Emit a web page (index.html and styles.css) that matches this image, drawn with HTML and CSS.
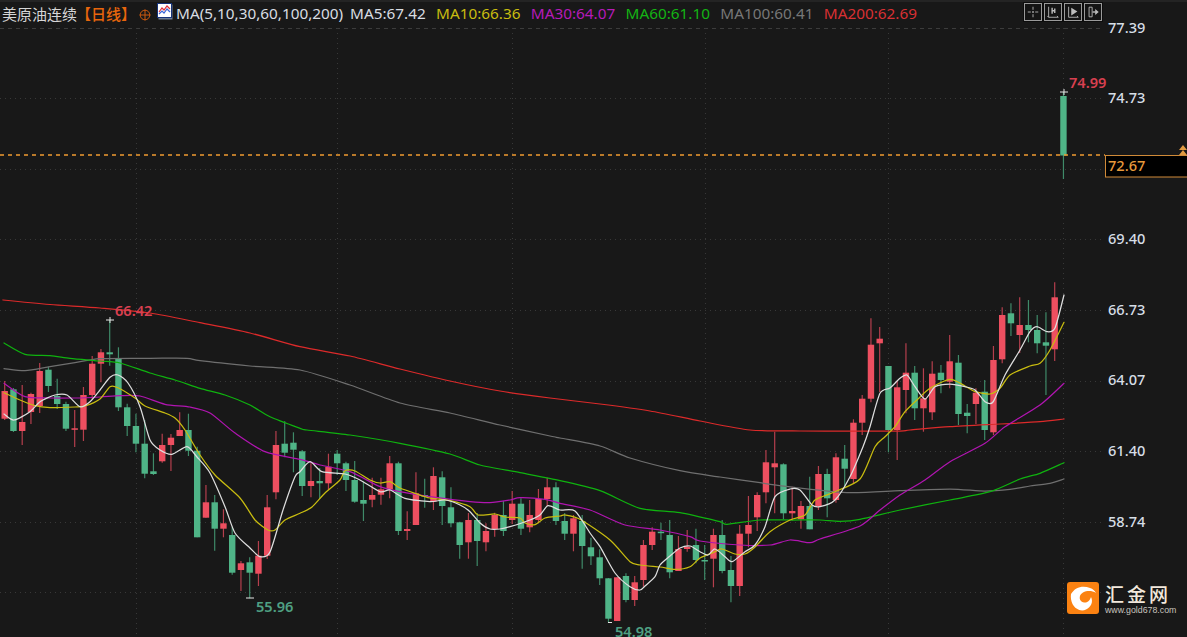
FILE: index.html
```html
<!DOCTYPE html>
<html lang="zh">
<head>
<meta charset="utf-8">
<title>美原油连续 日线</title>
<link rel="stylesheet" href="styles.css">
</head>
<body>
<div class="app">
  <header class="legend">
    <span class="symbol">美原油连续</span>
    <span class="period">【日线】</span>
    <svg class="target" viewBox="0 0 12 12"><circle cx="6" cy="6" r="4.8"/><path d="M0.5 6H11.5M6 0.5V11.5"/></svg>
    <svg class="ma-icon" viewBox="0 0 16 17">
      <rect class="ma-shadow" x="1.500" y="1.500" width="14" height="15"/>
      <rect class="ma-paper" x="0.500" y="0.500" width="14" height="14"/>
      <path class="ma-blue" d="M2 11L5 8L7 10L10 6L13 9"/>
      <path class="ma-red" d="M2 9L5 5L7 7L10 3L13 6"/>
    </svg>
    <span class="ma ma-base ma-first">MA(5,10,30,60,100,200)</span>
    <span class="ma ma-base">MA5:67.42</span>
    <span class="ma ma-y">MA10:66.36</span>
    <span class="ma ma-p">MA30:64.07</span>
    <span class="ma ma-g">MA60:61.10</span>
    <span class="ma ma-d">MA100:60.41</span>
    <span class="ma ma-r">MA200:62.69</span>
    <div class="tools">
      <button class="tool"><svg viewBox="0 0 16 16"><path d="M8 2V5.500M8 10.500V14M2 8H5.500M10.500 8H14"/><path d="M7.500 7.500h1v1h-1z"/></svg></button>
      <button class="tool"><svg viewBox="0 0 16 16"><path d="M3 2V14H14M3 14L1.500 12.500M14 14L12.500 12.500"/><path class="fat" d="M7 3V10M10 4V9M7 6.500H10"/></svg></button>
      <button class="tool"><svg viewBox="0 0 16 16"><path d="M3 2V14H14M14 14L12.500 12.500"/><path class="solid" d="M6 3L13 7.500L6 12Z"/></svg></button>
      <button class="tool"><svg viewBox="0 0 16 16"><path d="M3.500 2.500H7V13.500H3.500Z"/><path class="fat" d="M7.500 8H11"/><path class="solid" d="M10.500 4.500L14.500 8L10.500 11.500Z"/></svg></button>
    </div>
  </header>
  <svg class="chart" viewBox="0 24 1187 613" xmlns="http://www.w3.org/2000/svg">
    <g class="grid">
      <path class="grid-top" d="M0 28.500H1103"/>
      <path d="M0 98.500H1103M0 169.500H1103M0 239.500H1103M0 310.500H1103M0 381.500H1103M0 451.500H1103M0 522.500H1103M0 592.500H1103"/>
      <path d="M136.500 28V637M337.500 28V637M512.500 28V637M705.500 28V637M888.500 28V637M1063.500 28V637"/>
    </g>
    <g id="candles"></g>
    <g id="averages"></g>
    <path class="last-line" d="M0 155H1105"/>
    <path class="mark" d="M106 320H114M110 317V323M246 598H254M608 622.500H612M1060 92H1068M1064 89V95"/>
    <g class="axis">
      <text x="1108" y="33">77.39</text>
      <text x="1108" y="103">74.73</text>
      <text x="1108" y="244">69.40</text>
      <text x="1108" y="315">66.73</text>
      <text x="1108" y="385">64.07</text>
      <text x="1108" y="456">61.40</text>
      <text x="1108" y="527">58.74</text>
    </g>
    <g class="extreme">
      <text class="high" x="115" y="316">66.42</text>
      <text class="high" x="1069" y="88">74.99</text>
      <text class="low" x="256" y="612">55.96</text>
      <text class="low" x="615" y="636.500">54.98</text>
    </g>
    <path class="arrows" d="M1183 145L1187 150H1179ZM1183 150L1187 155H1179Z"/>
    <rect class="price-box" x="1105.500" y="155.500" width="90" height="21.500"/>
    <text class="price-text" x="1108" y="171">72.67</text>
  </svg>
  <div class="logo">
    <svg class="logo-mark" viewBox="0 0 32 32">
      <rect class="logo-bg" width="32" height="32" rx="3"/>
      <path class="logo-sun" d="M4 12C8 5 16 3 23 6C26 7 27.500 8.500 29 11C25 8.500 20 8.500 16 10.500C11 13 12 20 17 20.500C21 21 23 18 24 15C26.500 20 24 25 19 27.500C14 30 8 27 5.500 22C4 19 3.500 15 4 12Z"/>
    </svg>
    <div class="logo-text">
      <span class="logo-name">汇金网</span>
      <span class="logo-url">www.gold678.com</span>
    </div>
  </div>
</div>
<script src="chart.js"></script>
</body>
</html>
```
FILE: styles.css
```css
* { box-sizing: border-box; }
html, body { margin: 0; height: 100%; background: #181818; overflow: hidden; }
.app {
  position: relative;
  width: 1187px;
  height: 637px;
  background: #181818;
  border-top: 2px solid #242424;
  font-family: "Noto Sans", "Noto Sans CJK SC", sans-serif;
}
.legend {
  display: flex;
  align-items: center;
  height: 22px;
  padding: 0 84px 0 2px;
  font-size: 15.3px;
  white-space: nowrap;
}
.symbol { color: #d6d6d6; font: 15px "Noto Sans CJK SC", sans-serif; }
.period { color: #e8660c; font: 500 15px "Noto Sans CJK SC", sans-serif; margin-left: -1px; margin-right: -1px; }
.target { width: 12px; height: 12px; margin: 3px 0 0 4px; fill: none; stroke: #c9590f; stroke-width: 1; }
.ma-icon { width: 16px; height: 17px; margin: -4px 3px 0 6px; flex: none; }
.ma-shadow { fill: #6d7d94; }
.ma-paper { fill: #fff; stroke: #16337a; stroke-width: 1; }
.ma-red, .ma-blue { fill: none; stroke-width: 1.2; }
.ma-red { stroke: #e0303a; }
.ma-blue { stroke: #3a66d8; }
.ma { margin-right: 10.4px; }
.ma-first { margin-right: 7px; }
.ma-base { color: #d8dde2; }
.ma-y { color: #c8bc10; }
.ma-p { color: #b61bb8; }
.ma-g { color: #14b414; }
.ma-d { color: #777; }
.ma-r { color: #d93033; }
.tools { display: flex; gap: 2px; margin-left: auto; margin-top: -3px; background: #0c0c0c; padding: 1px; }
.tool {
  width: 18px; height: 18px; padding: 0;
  background: #141414;
  border: 1px solid #9a9a9a;
  display: flex; align-items: center; justify-content: center;
}
.tool svg { width: 14px; height: 14px; fill: none; stroke: #bdbdbd; stroke-width: 1; }
.tool .fat { stroke-width: 1.6; }
.tool .solid { fill: #bdbdbd; stroke: none; }
.chart { display: block; width: 1187px; height: 613px; overflow: visible; font-family: "Noto Sans", sans-serif; }
.grid path { fill: none; stroke: #383838; stroke-width: 1; stroke-dasharray: 1 4; }
.grid .grid-top { stroke: #3c3c3c; stroke-dasharray: 4 4; }
.last-line { stroke: #f09a30; stroke-width: 1.5; stroke-dasharray: 4 4; fill: none; }
.wick { stroke-width: 1.2; fill: none; }
.body-up { fill: #ee4f60; }
.body-down { fill: #4fb487; }
.wick-up { stroke: #b53f4d; }
.wick-down { stroke: #3f8a69; }
.avg { fill: none; stroke-width: 1.25; stroke-linejoin: round; stroke-linecap: round; }
.avg-5 { stroke: #dedede; }
.avg-10 { stroke: #c8bc10; }
.avg-30 { stroke: #b015b0; }
.avg-60 { stroke: #0fb20f; }
.avg-100 { stroke: #6f6f6f; }
.avg-200 { stroke: #dc2a2a; }
.mark { stroke: #e6e6e6; stroke-width: 1; fill: none; }
.axis text { fill: #d6dee6; font-size: 14.6px; font-weight: 500; }
.extreme text { font-size: 14.6px; font-weight: 600; }
.high { fill: #d84050; }
.low { fill: #4fa083; }
.arrows { fill: #e09a42; }
.price-box { fill: #000; stroke: #d08a38; stroke-width: 1; }
.price-text { fill: #e89a3c; font-size: 14.6px; font-weight: 500; }
.logo {
  position: absolute;
  left: 1067px;
  top: 580px;
  display: flex;
  gap: 6px;
  align-items: flex-start;
}
.logo-mark { width: 32px; height: 32px; flex: none; }
.logo-bg { fill: #fb8212; }
.logo-sun { fill: #fff; fill-rule: evenodd; }
.logo-text { display: flex; flex-direction: column; color: #f2e8dc; margin-top: -1px; }
.logo-name { font: 500 19px/25px "Noto Sans CJK SC", sans-serif; letter-spacing: 3px; }
.logo-url { font: 8.8px/9px "Liberation Sans", sans-serif; color: #c8c4be; }
```
FILE: chart.js
```js
// [isUp, bodyTop, bodyBottom, wickTop, wickBottom]
var candles = [
[1,391,418.7,381,420],[0,389.3,431,388,432],[1,422,431,385,445],[1,394,412,392.7,424],[1,371,406,363,413],[0,369.7,386,366.7,392],
[0,396,404,378.7,409],[0,404,428.7,401.7,431],[1,428.3,429.7,410,447],[1,395,429.7,387,441],[1,363.7,395,356,399],[1,352.3,363.7,349,382.3],
[0,352.3,354.3,320,365.7],[0,358.3,407.3,347.3,411],[0,407.3,426,403.7,436],[0,426,443.7,413.7,452.3],[0,443.7,473.7,420,478.3],[0,471.3,474,453.3,475],
[1,445,461.3,433.7,462.7],[1,437.7,445,434,471],[1,430,436,412.3,436],[0,430,450.7,413.7,456],[0,450.7,537.3,446.7,537.3],[1,502.3,517.7,485,517.7],
[0,502.3,528.7,495,550.7],[1,523.3,528.7,509.3,537.3],[0,535,572.7,526.7,574.7],[1,563.3,570,561,591],[0,562.3,572.7,557.3,598.3],[1,555.7,573.7,541,586],
[1,507.3,555.7,495,559],[1,445,492.3,431,499.3],[0,443.7,452.7,421.3,457.3],[0,442.7,449.7,432.3,472.3],[0,451.3,486,450,496],[1,481,486,463.3,497.3],
[0,481,483.3,468,499],[1,466.7,483.3,453.7,490],[0,453.7,463.3,450,475],[0,463.3,480,461.7,491],[0,480,501.7,461,502.7],[0,500,503.7,481.7,521],
[1,495,499.7,477.7,507.3],[1,489.3,494.7,477.7,504.7],[1,463.3,489.3,456,498.3],[0,463.3,531,461.7,535],[1,529,531,511.3,540],[1,493.3,525,472.3,525],
[0,495,496.7,478.7,507.7],[1,476,501.7,467.3,510],[0,477.3,506,471.3,525],[0,507.3,523.3,487.3,527.3],[0,522.3,545,521.7,558.7],[1,520,542.3,513,558.7],
[0,520,541,513,566],[1,531,542.3,523.3,551.3],[1,515,529,512.7,536.7],[0,515,531,501,536],[1,503.7,520,491,524],[0,503.7,528.7,498.3,535],
[1,515,527.3,500,532.3],[1,499,520,489,523.3],[1,487.3,499,477.7,506],[0,487.3,521,482.3,525],[0,521,533.7,513,540],[1,518.3,533.7,515,551.3],
[0,521,546,515,568.7],[0,547.3,556.3,537.7,565],[0,557.3,578.3,549.3,585],[0,578.3,618.7,578,622.7],[1,577.3,621,577.3,621],[0,576,600,573.3,602.3],
[1,582.3,600,576,606],[1,545,580,540,586.7],[1,531.7,545,527.3,550],[0,531.7,532.3,522.7,540],[0,535,572.3,520,578.3],[1,549,571,536,571],
[1,546.7,549,530,551.7],[0,545,560,528.7,563.3],[0,560,561,545,580],[1,535,558.7,528.7,587.3],[0,535,571,520,573.3],[0,570,586,556,602.3],
[1,533.7,586,525,596],[1,525,533.7,496,547.3],[1,495,517.3,492.3,531],[1,462.3,492.3,450,503.3],[1,463.3,467.3,431.7,513.3],[0,464.3,513.3,463.3,519.3],
[1,511,513.3,486.7,520.7],[1,506,519.3,501,528.7],[0,506,529.3,476.7,529.3],[1,474,506,466,510],[0,474,498.3,468.7,517.3],[1,457.3,500,453.3,502.7],
[0,458.7,468.7,445,488.3],[1,422.7,479,419.3,483.3],[1,398.7,422.7,395,435],[1,344.7,398.7,318.3,402.3],[1,338.7,343.3,327,392],[0,366,430,366,452.3],
[1,387.3,430,381,460],[1,372.7,390,343.3,413.3],[0,372.7,408.3,366,420],[1,398.3,408.3,368.3,431.7],[1,373.7,412.3,361.3,420],[0,372.7,380,365,393.3],
[1,361.3,381.7,335,388.3],[0,362.7,414,355,425],[0,412.7,416,404,433.3],[1,392.7,404,388.3,424],[0,391.7,430,380,440],[1,360,432.3,346,435],
[1,315,359.3,307.3,363.3],[0,313.3,323.3,303.3,336],[1,325,335,297.3,353],[0,325,330,300,342.3],[0,330,343.3,315,353.3],[0,342.3,345.7,312.3,395],
[1,297.3,349.3,282.3,361],[0,96,155.5,92,179]
];

var averages = {
200: "3,300 50,304.5 100,308 150,313 200,322.7 250,333 300,346.7 350,356 400,369 450,381 500,391 550,398 600,404 650,411 700,421 750,430 800,431 850,431 900,431 910,430 950,426.7 1000,424 1040,421.7 1064,419",
100: "4,368.7 25,370.7 50,366.7 75,362.7 100,358.7 150,358.3 187,358.3 200,360.7 250,366 300,370 350,385 400,403 450,413 500,425 550,436 560,438 600,446 630,458 680,470.7 720,477 760,482.7 800,488 850,492.7 900,490.7 950,489 985,491 1010,489.3 1030,486 1050,483.3 1064,479",
60: "4,343 25,354.3 50,355.7 70,358.3 100,361 120,363 150,373 175,380 200,388.3 225,395 250,405 270,416.7 300,428.3 307,430 350,435 400,443.3 450,454 480,465 520,472.7 560,480.7 600,490.7 640,508.3 680,512.7 720,521.7 727,524.3 760,520 793,520 820,520 840,521.3 860,519.3 900,510 950,500 990,491.7 1020,479 1040,473.3 1064,462.7",
30: "4,383.3 25,396.7 50,398 75,398 100,397 120,395.7 140,396 165,404.3 190,407 210,413 235,433 265,451.7 300,459.3 320,465 350,471.7 380,486.7 400,491.7 430,496.7 470,501.7 490,502.7 510,500 520,497.7 545,499.3 560,503.3 590,510 625,525 660,530 690,536.7 700,541 740,545 770,545 790,540 810,542.7 820,539 860,526 880,510 900,495 925,480 950,461.7 985,443.3 1005,426.7 1040,405 1064,383.3",
10: "4,392.7 20,400 35,405.7 50,407.7 75,407 85,406 100,399 110,386.7 118,387.7 135,398 145,406 165,413 175,418 185,430 200,455 215,475 240,498 255,520 268,530 275,530 285,520 300,513.3 312,507 325,493 340,480 345,470.7 355,471 370,480 380,483 390,481.7 400,488 415,493.3 430,498 450,500.7 470,506.7 478,515 495,514 505,517 520,518 525,523 535,524.7 545,518 560,516 565,515 580,519.3 610,540 630,561.7 640,565 660,567 675,569.3 690,566.7 700,558 715,551.7 722,549 735,554 745,554 755,547 770,531.7 790,520 805,515 815,500 835,491.7 860,479 875,446.7 885,436.7 895,426.7 905,411.7 918,399 930,388.3 950,379.3 965,386 975,391.7 990,394 1000,388.3 1010,375 1030,366 1040,363.3 1050,350 1064,322.3",
5: "4,414 14,420 30,411.7 40,401.7 55,395 67,395 80,406.7 90,401.7 100,390 110,377.3 118,375 128,383 140,406.7 150,440 160,450 172,454.3 187,446.7 197,457 210,473 225,506.7 235,533 250,548 260,556.7 270,552 283,510 295,476.7 300,471.7 310,461.7 322,471.7 345,474 360,480 380,491.7 390,490 405,498.3 430,501.7 445,500 460,505 470,511.7 480,523 490,529 500,529 510,526.7 530,520 540,515 548,505.7 560,510 575,511 590,533 600,546.7 615,573 630,586.7 640,590 645,586 655,576.7 660,565 670,556 680,548 690,546 700,551.7 708,555 715,549 725,556.7 732,561.7 745,551.7 755,545 765,526.7 775,496.7 790,489 800,490 812,505 820,506.7 835,500 850,476.7 863,446.7 870,426.7 880,393.3 890,388 900,378.3 907,375 915,386.7 925,399 935,386.7 950,384 965,386.7 975,390 985,401.7 993,402 1005,375 1020,350 1030,331.7 1037,326.7 1047,331.7 1055,328 1064,295"
};

var NS = "http://www.w3.org/2000/svg";
function add(parent, tag, attrs) {
  var el = document.createElementNS(NS, tag);
  for (var k in attrs) el.setAttribute(k, attrs[k]);
  parent.appendChild(el);
}

// Catmull-Rom through the sampled points, so the averages read as curves.
function smooth(str) {
  var p = str.split(" ").map(function (s) { return s.split(",").map(Number); });
  var d = "M" + p[0][0] + " " + p[0][1];
  for (var i = 0; i < p.length - 1; i++) {
    var a = p[i - 1] || p[i], b = p[i], c = p[i + 1], e = p[i + 2] || c;
    var c1x = b[0] + (c[0] - a[0]) / 8, c1y = b[1] + (c[1] - a[1]) / 8;
    var c2x = c[0] - (e[0] - b[0]) / 8, c2y = c[1] - (e[1] - b[1]) / 8;
    d += "C" + c1x.toFixed(1) + " " + c1y.toFixed(1) + " " + c2x.toFixed(1) + " " + c2y.toFixed(1) + " " + c[0] + " " + c[1];
  }
  return d;
}

var candleLayer = document.getElementById("candles");
candles.forEach(function (c, i) {
  var x = 4.7 + 8.75 * i;
  var dir = c[0] ? "up" : "down";
  add(candleLayer, "line", { class: "wick wick-" + dir, x1: x, x2: x, y1: c[3], y2: c[4] });
  add(candleLayer, "rect", { class: "body-" + dir, x: x - 3.2, y: c[1], width: 6.4, height: Math.max(c[2] - c[1], 1.5) });
});

var avgLayer = document.getElementById("averages");
[200, 100, 60, 30, 10, 5].forEach(function (n) {
  add(avgLayer, "path", { class: "avg avg-" + n, d: smooth(averages[n]) });
});
```
